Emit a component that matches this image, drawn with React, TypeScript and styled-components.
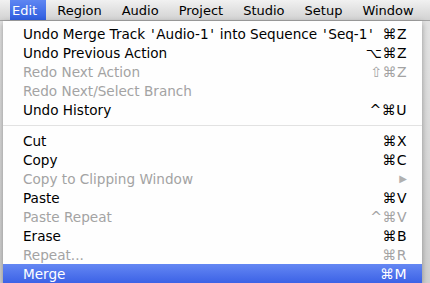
import React from "react";
import styled, {createGlobalStyle} from "styled-components";

const Global = createGlobalStyle`
  html, body {
    margin: 0;
    padding: 0;
    background: #d6d6d6;
    font-family: "DejaVu Sans", "Liberation Sans", sans-serif;
  }
`;

const Screen = styled.div`
  width: 430px;
  height: 283px;
  overflow: hidden;
  display: flex;
  flex-direction: column;
  background: linear-gradient(#e4e4e4, #cfcfcf);
`;

const MenuBar = styled.div`
  height: 21px;
  flex: none;
  display: flex;
  align-items: stretch;
  padding-left: 10px;
  background: linear-gradient(#f1f1f1, #d2d2d2);
  border-bottom: 1px solid #a4a4a4;
  box-sizing: border-box;
  font-size: 13px;
`;

const BarItem = styled.div<{ $active?: boolean }>`
  display: flex;
  align-items: center;
  padding: 0 9px 0 2px;
  margin-right: 9px;
  color: ${p => p.$active ? "#fff" : "#000"};
  background: ${p => p.$active ? "linear-gradient(#5f86f2, #2f5ee0)" : "transparent"};
`;

const Body = styled.div`
  flex: 1;
  display: flex;
  padding-left: 3px;
`;

const Menu = styled.div`
  width: 419px;
  background: rgba(255, 255, 255, 0.97);
  padding-top: 3px;
  box-shadow: 0 2px 6px rgba(0, 0, 0, 0.35);
  font-size: 13.6px;
`;

const Row = styled.div<{ $disabled?: boolean; $selected?: boolean }>`
  height: 19px;
  display: flex;
  align-items: center;
  justify-content: space-between;
  padding: 0 15px 0 20px;
  color: ${p => p.$selected ? "#fff" : p.$disabled ? "#a3a3a3" : "#000"};
  background: ${p => p.$selected ? "linear-gradient(#6487f3, #3c62e6)" : "transparent"};
`;

// Lucida draws its straight quotes wider than DejaVu does
const Quote = styled.span`
  margin: 0 1.5px;
`;

const Shortcut = styled.span`
  font-size: 14px;
  letter-spacing: 0.5px;
`;

const Arrow = styled.span`
  font-size: 10px;
  color: #b0b0b0;
`;

const Separator = styled.div`
  height: 1px;
  margin: 6px 0 5px;
  background: #e2e2e2;
`;

type Item = { label: string; keys?: string; disabled?: boolean; sub?: boolean; selected?: boolean } | "sep";

const items: Item[] = [
    {label: "Undo Merge Track 'Audio-1' into Sequence 'Seq-1'", keys: "⌘Z"},
    {label: "Undo Previous Action", keys: "⌥⌘Z"},
    {label: "Redo Next Action", keys: "⇧⌘Z", disabled: true},
    {label: "Redo Next/Select Branch", disabled: true},
    {label: "Undo History", keys: "^⌘U"},
    "sep",
    {label: "Cut", keys: "⌘X"},
    {label: "Copy", keys: "⌘C"},
    {label: "Copy to Clipping Window", sub: true, disabled: true},
    {label: "Paste", keys: "⌘V"},
    {label: "Paste Repeat", keys: "^⌘V", disabled: true},
    {label: "Erase", keys: "⌘B"},
    {label: "Repeat...", keys: "⌘R", disabled: true},
    {label: "Merge", keys: "⌘M", selected: true},
];

const bar = ["Edit", "Region", "Audio", "Project", "Studio", "Setup", "Window"];

const Label = ({text}: { text: string }) => (
    <span>
        {text.split(/(')/).map((part, i) => part === "'" ? <Quote key={i}>'</Quote> : part)}
    </span>
);

export default function App() {
    return (
        <>
            <Global/>
            <Screen>
                <MenuBar>
                    {bar.map((b, i) => <BarItem key={b} $active={i === 0}>{b}</BarItem>)}
                </MenuBar>
                <Body>
                    <Menu>
                        {items.map((it, i) => it === "sep"
                            ? <Separator key={i}/>
                            : <Row key={i} $disabled={it.disabled} $selected={it.selected}>
                                <Label text={it.label}/>
                                {it.sub ? <Arrow>▶</Arrow> : <Shortcut>{it.keys}</Shortcut>}
                            </Row>)}
                    </Menu>
                </Body>
            </Screen>
        </>
    );
}
